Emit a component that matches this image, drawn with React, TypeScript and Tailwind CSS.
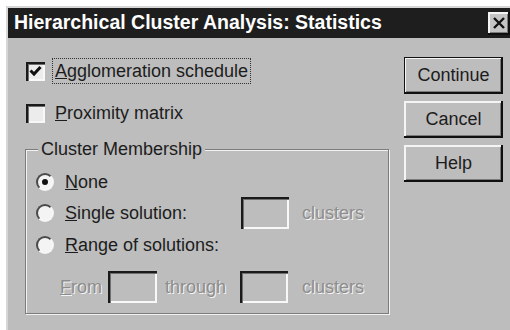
import React from 'react';

const raised =
  'shadow-[inset_-2px_-2px_0_#101010,inset_2px_2px_0_#f4f4f4,inset_-3px_-3px_0_#7a7a7a]';
const sunken =
  'shadow-[inset_2px_2px_0_#1a1a1a,inset_3px_3px_0_#6e6e6e,inset_-2px_-2px_0_#f8f8f8]';
const disabled = 'text-[#8d8d8d] [text-shadow:1px_1px_0_#f4f4f4]';

const Check = ({ checked }: { checked?: boolean }) => (
  <div className={`w-[19px] h-[19px] bg-[#ececec] flex items-center justify-center ${sunken}`}>
    {checked && (
      <svg width="13" height="12" viewBox="0 0 13 12">
        <path d="M1.5 5.5 L5 9 L11.5 2" stroke="#111" strokeWidth="3" fill="none" />
      </svg>
    )}
  </div>
);

const Radio = ({ selected }: { selected?: boolean }) => (
  <div className="w-[18px] h-[18px] rounded-full border-2 border-t-[#4a4a4a] border-l-[#4a4a4a] border-b-[#f6f6f6] border-r-[#f6f6f6] bg-[#f4f4f4] flex items-center justify-center">
    {selected && <div className="w-[6px] h-[6px] rounded-full bg-[#111]" />}
  </div>
);

const Field = ({ w }: { w: string }) => <div className={`${w} h-[32px] bg-[#bdbdbd] ${sunken}`} />;

const Btn = ({ label, isDefault }: { label: string; isDefault?: boolean }) => (
  <div
    className={`w-[99px] h-[37px] flex items-center justify-center text-[18px] ${raised} ${
      isDefault ? 'outline outline-1 outline-[#111] -outline-offset-1' : ''
    }`}
  >
    {label}
  </div>
);

export default function App() {
  return (
    <div className="w-[510px] h-[330px] bg-white overflow-hidden pt-[6px] pl-[6px] font-['Liberation_Sans',Arial,sans-serif] text-[#1c1c1c]">
      <div className="w-[510px] h-[330px] bg-[#bdbdbd] border-l-2 border-t-2 border-[#d6d6d6]">
        <div className="h-[30px] bg-[#1e1e1e] flex items-center justify-between pl-[6px]">
          <span className="text-white font-bold text-[19.5px] leading-none">
            Hierarchical Cluster Analysis: Statistics
          </span>
          <div className={`w-[22px] h-[23px] mr-[6px] bg-[#c4c4c4] flex items-center justify-center ${raised}`}>
            <svg width="12" height="12" viewBox="0 0 12 12">
              <path d="M1 1 L11 11 M11 1 L1 11" stroke="#111" strokeWidth="2.4" />
            </svg>
          </div>
        </div>

        <div className="flex">
          {/* left side */}
          <div className="w-[396px] pl-[18px] pt-[24px] text-[18px] leading-none">
            <div className="h-[18px] flex items-center">
              <Check checked />
              <span className="ml-[7px] px-[2px] py-[3px] border border-dotted border-[#333]">
                <u>A</u>gglomeration schedule
              </span>
            </div>
            <div className="h-[18px] mt-[24px] flex items-center">
              <Check />
              <span className="ml-[10px]">
                <u>P</u>roximity matrix
              </span>
            </div>

            <div className="relative mt-[27px] -ml-[1px] w-[364px] h-[165px] border border-[#7c7c7c] shadow-[inset_1px_1px_0_#f2f2f2,1px_1px_0_#f2f2f2] pl-[10px]">
              <span className="absolute -top-[11px] left-[12px] px-[3px] bg-[#bdbdbd] leading-[20px]">
                Cluster Membership
              </span>
              <div className="h-[18px] mt-[23px] flex items-center">
                <Radio selected />
                <span className="ml-[11px]">
                  <u>N</u>one
                </span>
              </div>
              <div className="h-[32px] mt-[6px] flex items-center">
                <div className="w-[205px] flex items-center">
                  <Radio />
                  <span className="ml-[11px]">
                    <u>S</u>ingle solution:
                  </span>
                </div>
                <Field w="w-[48px]" />
                <span className={`ml-[13px] ${disabled}`}>clusters</span>
              </div>
              <div className="h-[18px] mt-[7px] flex items-center">
                <Radio />
                <span className="ml-[11px]">
                  <u>R</u>ange of solutions:
                </span>
              </div>
              <div className="h-[33px] mt-[16px] flex items-center pl-[24px]">
                <span className={`w-[48px] ${disabled}`}>
                  <u>F</u>rom
                </span>
                <Field w="w-[49px]" />
                <span className={`ml-[8px] w-[75px] ${disabled}`}>through</span>
                <Field w="w-[48px]" />
                <span className={`ml-[14px] ${disabled}`}>clusters</span>
              </div>
            </div>
          </div>

          {/* buttons */}
          <div className="pt-[19px] flex flex-col gap-[7px]">
            <Btn label="Continue" isDefault />
            <Btn label="Cancel" />
            <Btn label="Help" />
          </div>
        </div>
      </div>
    </div>
  );
}
